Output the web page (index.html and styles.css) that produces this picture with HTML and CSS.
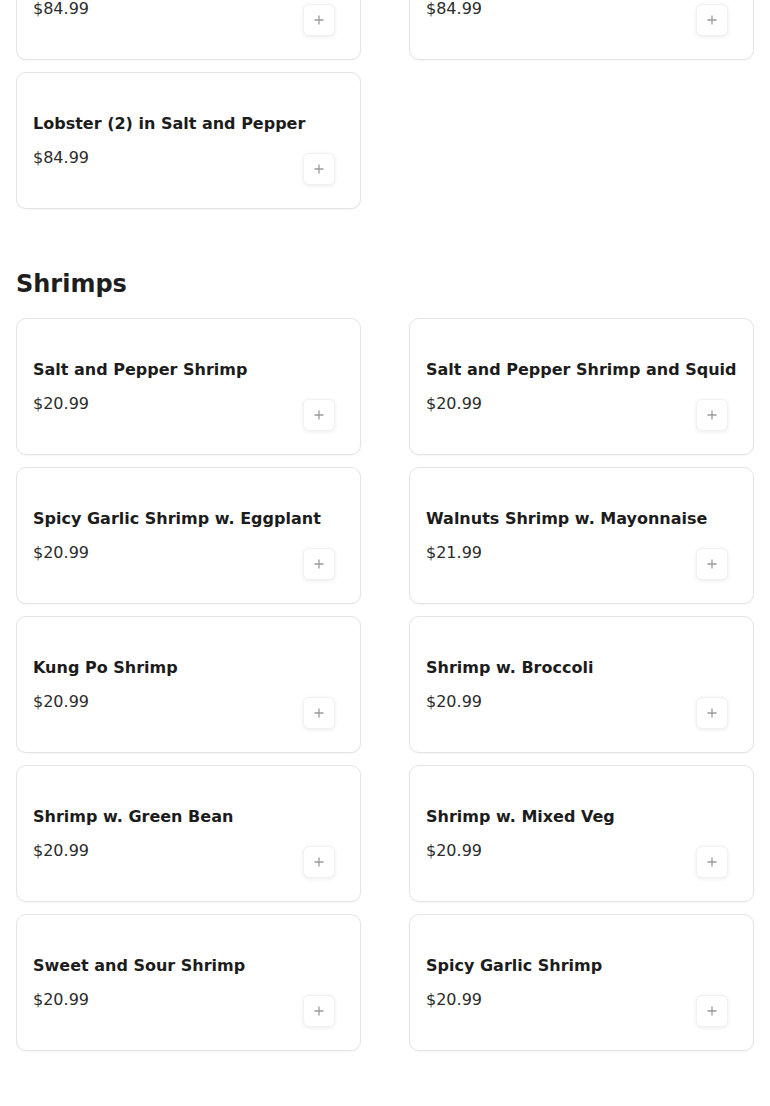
FILE: index.html
```html
<!DOCTYPE html>
<html lang="en">
<head>
<meta charset="utf-8">
<title>Menu</title>
<link rel="stylesheet" href="styles.css">
</head>
<body>
<main class="menu">
  <section class="category category-first">
    <div class="grid">
      <div class="card">
        <div class="title">Lobster (2) w. Ginger and Scallion</div>
        <div class="row"><span class="price">$84.99</span><button class="add" aria-label="Add"><svg viewBox="0 0 12 12" width="12" height="12"><path d="M6 1.5v9M1.5 6h9" stroke="#9b9b9b" stroke-width="1.3" fill="none"/></svg></button></div>
      </div>
      <div class="card">
        <div class="title">Lobster (2) w. Black Bean Sauce</div>
        <div class="row"><span class="price">$84.99</span><button class="add" aria-label="Add"><svg viewBox="0 0 12 12" width="12" height="12"><path d="M6 1.5v9M1.5 6h9" stroke="#9b9b9b" stroke-width="1.3" fill="none"/></svg></button></div>
      </div>
      <div class="card">
        <div class="title">Lobster (2) in Salt and Pepper</div>
        <div class="row"><span class="price">$84.99</span><button class="add" aria-label="Add"><svg viewBox="0 0 12 12" width="12" height="12"><path d="M6 1.5v9M1.5 6h9" stroke="#9b9b9b" stroke-width="1.3" fill="none"/></svg></button></div>
      </div>
    </div>
  </section>

  <section class="category">
    <h2 class="cat-title">Shrimps</h2>
    <div class="grid">
      <div class="card">
        <div class="title">Salt and Pepper Shrimp</div>
        <div class="row"><span class="price">$20.99</span><button class="add" aria-label="Add"><svg viewBox="0 0 12 12" width="12" height="12"><path d="M6 1.5v9M1.5 6h9" stroke="#9b9b9b" stroke-width="1.3" fill="none"/></svg></button></div>
      </div>
      <div class="card">
        <div class="title">Salt and Pepper Shrimp and Squid</div>
        <div class="row"><span class="price">$20.99</span><button class="add" aria-label="Add"><svg viewBox="0 0 12 12" width="12" height="12"><path d="M6 1.5v9M1.5 6h9" stroke="#9b9b9b" stroke-width="1.3" fill="none"/></svg></button></div>
      </div>
      <div class="card">
        <div class="title">Spicy Garlic Shrimp w. Eggplant</div>
        <div class="row"><span class="price">$20.99</span><button class="add" aria-label="Add"><svg viewBox="0 0 12 12" width="12" height="12"><path d="M6 1.5v9M1.5 6h9" stroke="#9b9b9b" stroke-width="1.3" fill="none"/></svg></button></div>
      </div>
      <div class="card">
        <div class="title">Walnuts Shrimp w. Mayonnaise</div>
        <div class="row"><span class="price">$21.99</span><button class="add" aria-label="Add"><svg viewBox="0 0 12 12" width="12" height="12"><path d="M6 1.5v9M1.5 6h9" stroke="#9b9b9b" stroke-width="1.3" fill="none"/></svg></button></div>
      </div>
      <div class="card">
        <div class="title">Kung Po Shrimp</div>
        <div class="row"><span class="price">$20.99</span><button class="add" aria-label="Add"><svg viewBox="0 0 12 12" width="12" height="12"><path d="M6 1.5v9M1.5 6h9" stroke="#9b9b9b" stroke-width="1.3" fill="none"/></svg></button></div>
      </div>
      <div class="card">
        <div class="title">Shrimp w. Broccoli</div>
        <div class="row"><span class="price">$20.99</span><button class="add" aria-label="Add"><svg viewBox="0 0 12 12" width="12" height="12"><path d="M6 1.5v9M1.5 6h9" stroke="#9b9b9b" stroke-width="1.3" fill="none"/></svg></button></div>
      </div>
      <div class="card">
        <div class="title">Shrimp w. Green Bean</div>
        <div class="row"><span class="price">$20.99</span><button class="add" aria-label="Add"><svg viewBox="0 0 12 12" width="12" height="12"><path d="M6 1.5v9M1.5 6h9" stroke="#9b9b9b" stroke-width="1.3" fill="none"/></svg></button></div>
      </div>
      <div class="card">
        <div class="title">Shrimp w. Mixed Veg</div>
        <div class="row"><span class="price">$20.99</span><button class="add" aria-label="Add"><svg viewBox="0 0 12 12" width="12" height="12"><path d="M6 1.5v9M1.5 6h9" stroke="#9b9b9b" stroke-width="1.3" fill="none"/></svg></button></div>
      </div>
      <div class="card">
        <div class="title">Sweet and Sour Shrimp</div>
        <div class="row"><span class="price">$20.99</span><button class="add" aria-label="Add"><svg viewBox="0 0 12 12" width="12" height="12"><path d="M6 1.5v9M1.5 6h9" stroke="#9b9b9b" stroke-width="1.3" fill="none"/></svg></button></div>
      </div>
      <div class="card">
        <div class="title">Spicy Garlic Shrimp</div>
        <div class="row"><span class="price">$20.99</span><button class="add" aria-label="Add"><svg viewBox="0 0 12 12" width="12" height="12"><path d="M6 1.5v9M1.5 6h9" stroke="#9b9b9b" stroke-width="1.3" fill="none"/></svg></button></div>
      </div>
    </div>
  </section>
</main>
</body>
</html>
```

FILE: styles.css
```css
html, body {
  margin: 0;
  padding: 0;
  background: #ffffff;
}

body {
  font-family: "DejaVu Sans", "Liberation Sans", sans-serif;
  color: #1c1c1c;
  overflow: hidden;
}

.menu {
  padding: 0 16px 56px;
}

.category-first {
  margin-top: -77px;
}

.cat-title {
  margin: 57px 0 16px;
  font-size: 24px;
  line-height: 36px;
  font-weight: 700;
  color: #1e1e1e;
}

.grid {
  display: grid;
  grid-template-columns: 345px 345px;
  column-gap: 48px;
  row-gap: 12px;
}

.card {
  box-sizing: border-box;
  height: 137px;
  border: 1px solid #e4e4e4;
  border-radius: 10px;
  padding: 39px 16px 0 16px;
  display: flex;
  flex-direction: column;
  background: #fff;
  box-shadow: 0 1px 2px rgba(0, 0, 0, 0.04);
}

.title {
  font-size: 16px;
  line-height: 24px;
  font-weight: 700;
  color: #1c1c1c;
  white-space: nowrap;
}

.row {
  display: flex;
  justify-content: space-between;
  align-items: flex-start;
  margin-top: 10px;
}

.price {
  font-size: 16px;
  line-height: 24px;
  color: #2b2b2b;
}

.add {
  width: 32px;
  height: 32px;
  margin-top: 7px;
  margin-right: 9px;
  padding: 0;
  border: 1px solid #f1f1f1;
  border-radius: 6px;
  background: #fff;
  box-shadow: 0 1px 4px rgba(0, 0, 0, 0.08);
  display: flex;
  align-items: center;
  justify-content: center;
  cursor: pointer;
}

.add svg {
  display: block;
}
```
